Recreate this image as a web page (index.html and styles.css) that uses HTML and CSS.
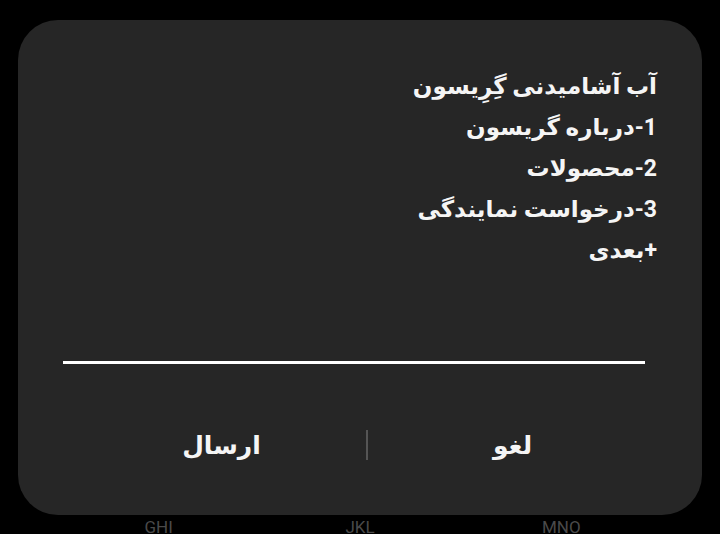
FILE: index.html
```html
<!DOCTYPE html>
<html lang="fa">
<head>
<meta charset="utf-8">
<link rel="stylesheet" href="styles.css">
</head>
<body>
<div class="screen">
  <div class="dialog">
    <div class="message" dir="rtl">
      <div class="line">آب آشامیدنی گِرِیسون</div>
      <div class="line">1-درباره گریسون</div>
      <div class="line">2-محصولات</div>
      <div class="line">3-درخواست نمایندگی</div>
      <div class="line">+بعدی</div>
    </div>
    <div class="input-line"></div>
    <div class="actions" dir="rtl">
      <div class="btn">لغو</div>
      <div class="sep"></div>
      <div class="btn">ارسال</div>
    </div>
  </div>
  <div class="keys">
    <span class="key">GHI</span>
    <span class="key">JKL</span>
    <span class="key">MNO</span>
  </div>
</div>
</body>
</html>
```
FILE: styles.css
```css
html, body {
  margin: 0;
  padding: 0;
  background: #000;
  width: 720px;
  height: 534px;
  overflow: hidden;
}
.screen {
  padding: 20px 18px 0 18px;
  font-family: "Roboto", "DejaVu Sans", sans-serif;
}
.dialog {
  height: 495px;
  background: #262626;
  border-radius: 40px;
  display: flex;
  flex-direction: column;
  box-sizing: border-box;
  padding: 0 45px 0 45px;
}
.message {
  padding-top: 46px;
  color: #f5f5f5;
  font-size: 23px;
  font-weight: 700;
  line-height: 41px;
  text-align: right;
  height: 341px;
  flex: none;
  box-sizing: border-box;
}
.input-line {
  height: 3px;
  flex: none;
  background: #fff;
  margin: 0 12px 0 0;
}
.actions {
  display: flex;
  align-items: center;
  flex: 1;
  padding: 11px 0 0 14px;
  box-sizing: border-box;
}
.btn {
  flex: 1;
  text-align: center;
  color: #f5f5f5;
  font-size: 25px;
  font-weight: 700;
}
.sep {
  width: 2px;
  height: 30px;
  background: #555;
}
.keys {
  display: flex;
  justify-content: space-around;
  padding: 0 40px;
  height: 19px;
  line-height: 24px;
  overflow: hidden;
}
.key {
  color: #4a4a4a;
  font-size: 17px;
  width: 100px;
  text-align: center;
}
```
